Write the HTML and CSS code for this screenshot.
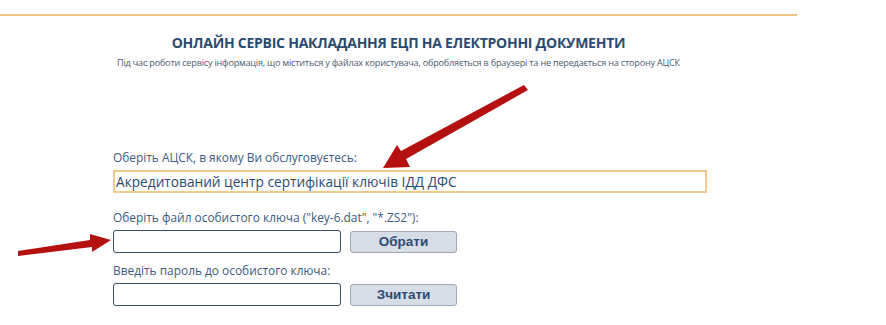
FILE: index.html
```html
<!DOCTYPE html>
<html lang="uk">
<head>
<meta charset="utf-8">
<link rel="stylesheet" href="styles.css">
</head>
<body>
<div class="page">
  <div class="rule"></div>
  <header class="head">
    <h1 class="title">ОНЛАЙН СЕРВІС НАКЛАДАННЯ ЕЦП НА ЕЛЕКТРОННІ ДОКУМЕНТИ</h1>
    <p class="subtitle">Під час роботи сервісу інформація, що міститься у файлах користувача, обробляється в браузері та не передається на сторону АЦСК</p>
  </header>
  <form class="form">
    <label class="label">Оберіть АЦСК, в якому Ви обслуговуєтесь:</label>
    <div class="select">Акредитований центр сертифікації ключів ІДД ДФС</div>
    <label class="label label-2">Оберіть файл особистого ключа ("key-6.dat", "*.ZS2"):</label>
    <div class="row">
      <div class="input"></div>
      <div class="btn">Обрати</div>
    </div>
    <label class="label label-3">Введіть пароль до особистого ключа:</label>
    <div class="row">
      <div class="input"></div>
      <div class="btn">Зчитати</div>
    </div>
  </form>
  <svg class="arrows" width="886" height="325" viewBox="0 0 886 325">
    <polygon class="arrow" points="524,85 528,90 406,159 410,167 383,168 397,145 401,151"/>
    <polygon class="arrow" points="18,251 18,256 92,247 92,252 111,240 90,234 90,240"/>
  </svg>
</div>
</body>
</html>
```
FILE: styles.css
```css
html, body {
  margin: 0;
  padding: 0;
  background: #ffffff;
}
.page {
  position: relative;
  width: 886px;
  height: 325px;
  overflow: hidden;
  font-family: "Open Sans", "Noto Sans", sans-serif;
}
.rule {
  margin-top: 14px;
  width: 797px;
  height: 2px;
  background: #eec47e;
}
.head {
  width: 797px;
  text-align: center;
  padding-top: 19px;
}
.title {
  margin: 0;
  font-size: 14px;
  font-weight: 700;
  color: #2b4a6f;
  letter-spacing: -0.25px;
  line-height: 16px;
}
.subtitle {
  margin: 7px 0 0;
  font-size: 9.1px;
  color: #4a5a70;
  line-height: 10px;
  letter-spacing: -0.2px;
}
.form {
  display: flex;
  flex-direction: column;
  align-items: flex-start;
  padding-left: 113px;
  padding-top: 82px;
}
.label {
  font-size: 11.9px;
  color: #3b5a80;
  line-height: 14px;
}
.select {
  margin-top: 6px;
  width: 589px;
  height: 19px;
  border: 2px solid #f2ca8c;
  font-size: 13.7px;
  line-height: 19px;
  color: #2b4a6f;
  padding-left: 1px;
}
.label-2 { margin-top: 17px; }
.label-3 { margin-top: 10px; }
.row {
  display: flex;
  align-items: center;
  gap: 9px;
  margin-top: 6px;
}
.input {
  width: 226px;
  height: 21px;
  border: 1px solid #3d4d60;
  border-radius: 3px;
  background: #fff;
}
.btn {
  width: 105px;
  height: 20px;
  border: 1px solid #9ea8b4;
  border-radius: 3px;
  background: #d6dde7;
  color: #2c4a74;
  font-family: "Liberation Sans", Arial, sans-serif;
  font-weight: 700;
  font-size: 13.5px;
  line-height: 20px;
  text-align: center;
}
.arrows {
  position: absolute;
  left: 0;
  top: 0;
  pointer-events: none;
}
.arrow {
  fill: #b51010;
}
```
